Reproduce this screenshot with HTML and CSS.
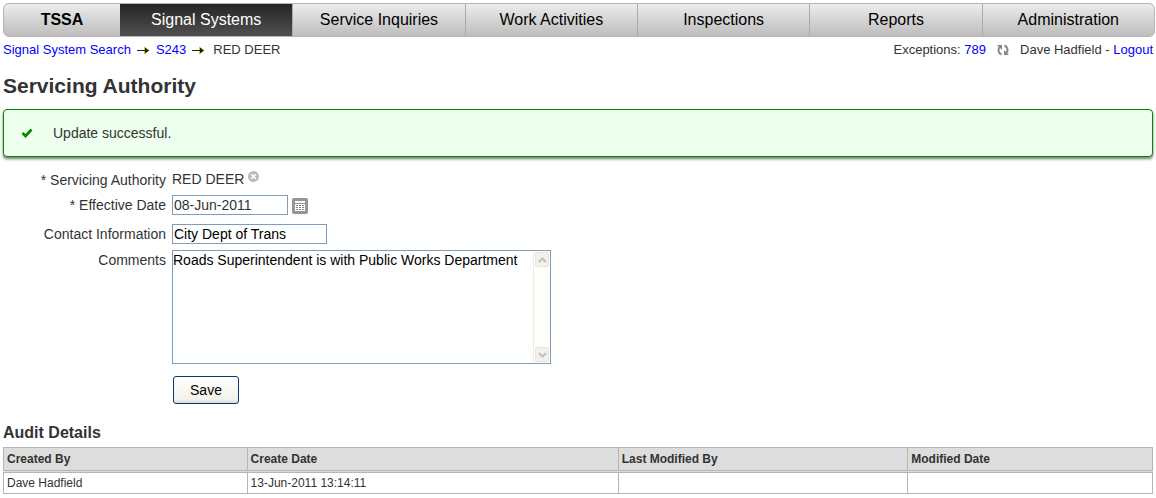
FILE: index.html
```html
<!DOCTYPE html>
<html lang="en">
<head>
<meta charset="utf-8">
<title>Servicing Authority</title>
<link rel="stylesheet" href="styles.css">
</head>
<body>
<nav class="tabs">
  <a class="tab brand" href="#">TSSA</a>
  <a class="tab active" href="#">Signal Systems</a>
  <a class="tab" href="#">Service Inquiries</a>
  <a class="tab" href="#">Work Activities</a>
  <a class="tab" href="#">Inspections</a>
  <a class="tab" href="#">Reports</a>
  <a class="tab" href="#">Administration</a>
</nav>
<div class="subbar">
  <div class="crumbs">
    <a href="#">Signal System Search</a>
    <svg class="arrow" width="13" height="9" viewBox="0 0 13 9"><path d="M7 .5l5.500 4L7 8.500z" fill="#cc3"/><path d="M0 4h9v1H0z" fill="#220"/><path d="M8 1.500l4 3-4 3z" fill="#220"/></svg>
    <a href="#">S243</a>
    <svg class="arrow" width="13" height="9" viewBox="0 0 13 9"><path d="M7 .5l5.500 4L7 8.500z" fill="#cc3"/><path d="M0 4h9v1H0z" fill="#220"/><path d="M8 1.500l4 3-4 3z" fill="#220"/></svg>
    <span class="here">RED DEER</span>
  </div>
  <div class="account">
    <span>Exceptions: <a href="#">789</a></span>
    <svg class="refresh" width="12" height="12" viewBox="0 0 12 12" fill="none" stroke="#888" stroke-width="2"><path d="M4.500 10.500C1 9 .5 5 3 2.500"/><path d="M0 1h5v5z" fill="#888" stroke="none"/><path d="M7.500 1.500C11 3 11.500 7 9 9.500"/><path d="M12 11H7V6z" fill="#888" stroke="none"/></svg>
    <span>Dave Hadfield - <a href="#">Logout</a></span>
  </div>
</div>
<main>
  <h1>Servicing Authority</h1>
  <div class="notice" role="status">
    <svg width="12" height="10" viewBox="0 0 12 10"><path d="M1.500 5L4.500 8 10.500 1.500" fill="none" stroke="#080" stroke-width="2.600"/></svg>
    <span>Update successful.</span>
  </div>
  <form class="form">
    <span class="label">* Servicing Authority</span>
    <div class="field value">RED DEER
      <button class="clear" type="button" aria-label="Clear"><svg width="11" height="11" viewBox="0 0 11 11"><circle cx="5.500" cy="5.500" r="5.500" fill="#bbb"/><path d="M3.300 3.300l4.400 4.400M7.700 3.300L3.300 7.700" stroke="#fff" stroke-width="1.600"/></svg></button>
    </div>
    <label class="label" for="date">* Effective Date</label>
    <div class="field">
      <input class="text date" id="date" type="text" value="08-Jun-2011">
      <button class="calendar" type="button" aria-label="Choose date"><svg width="16" height="16" viewBox="0 0 16 16"><rect width="16" height="16" rx="2" fill="#959595"/><path d="M3 3h10v2H3z" fill="#fff"/><path d="M3 6h10v7H3z" fill="#fff"/><path d="M4 7h2v1H4zM7 7h2v1H7zM10 7h2v1h-2zM4 9h2v1H4zM7 9h2v1H7zM10 9h2v1h-2zM4 11h2v1H4zM7 11h2v1H7zM10 11h2v1h-2z" fill="#858585"/></svg></button>
    </div>
    <label class="label" for="contact">Contact Information</label>
    <div class="field"><input class="text contact" id="contact" type="text" value="City Dept of Trans"></div>
    <label class="label" for="comments">Comments</label>
    <div class="field area">
      <textarea class="comments" id="comments">Roads Superintendent is with Public Works Department</textarea>
      <div class="scroll" aria-hidden="true">
        <span class="step"><svg width="9" height="6" viewBox="0 0 9 6"><path d="M1 5l3.500-3.500L8 5" fill="none" stroke="#c2c1b8" stroke-width="2"/></svg></span>
        <span class="step"><svg width="9" height="6" viewBox="0 0 9 6"><path d="M1 1l3.500 3.500L8 1" fill="none" stroke="#c2c1b8" stroke-width="2"/></svg></span>
      </div>
    </div>
    <button class="save" type="submit">Save</button>
  </form>
  <h2>Audit Details</h2>
  <table class="audit">
    <colgroup><col class="c1"><col class="c2"><col class="c3"><col class="c4"></colgroup>
    <thead><tr><th>Created By</th><th>Create Date</th><th>Last Modified By</th><th>Modified Date</th></tr></thead>
    <tbody><tr><td>Dave Hadfield</td><td>13-Jun-2011 13:14:11</td><td></td><td></td></tr></tbody>
  </table>
</main>
</body>
</html>
```
FILE: styles.css
```css
* { box-sizing: border-box; }
body {
  margin: 0;
  padding: 3px 3px 0;
  background: #fff;
  color: #333;
  font: 14px/18px "Liberation Sans", Arial, sans-serif;
}
a { color: #00f; text-decoration: none; }
svg { display: block; }
.tabs {
  display: flex;
  height: 34px;
  margin-right: -2px;
  border: 1px solid #b4b4b4;
  border-radius: 6px;
  overflow: hidden;
  background: linear-gradient(#ececec, #bdbdbd);
}
.tab {
  flex: 1 1 172px;
  border-left: 1px solid #aaa;
  color: #000;
  font-size: 16px;
  line-height: 32px;
  text-align: center;
}
.brand { flex: 0 0 116px; border-left: 0; font-weight: bold; }
.active { border-left: 0; background: linear-gradient(#252525, #505050); color: #fff; }
.subbar {
  display: flex;
  justify-content: space-between;
  margin-top: 4px;
  font-size: 13px;
}
.crumbs, .account { display: flex; align-items: center; }
.crumbs { gap: 6px; }
.here { margin-left: 2px; }
.account { gap: 11px; }
h1 { margin: 14px 0 10px; font-size: 21px; line-height: 26px; }
.notice {
  display: flex;
  align-items: center;
  gap: 20px;
  height: 48px;
  padding-left: 17px;
  border: 1px solid #080;
  border-radius: 4px;
  background: #edffed;
  box-shadow: 0 2px 3px #777;
}
.form {
  display: grid;
  grid-template-columns: 163px 1fr;
  column-gap: 6px;
  justify-items: start;
  margin-top: 13px;
}
.label { justify-self: end; padding-top: 1px; }
.field { display: flex; }
.value { height: 25px; gap: 4px; }
.clear, .calendar { padding: 0; border: 0; background: none; }
.clear { height: 11px; margin-top: 1px; }
.calendar { height: 16px; margin: 3px 0 0 4px; }
.text {
  height: 20px;
  padding: 0 1px;
  border: 1px solid #7f9db9;
  background: #fff;
  font: inherit;
}
.date { width: 116px; color: #333; }
.contact { width: 155px; }
.text.contact { color: #000; }
.field:has(.date) { height: 29px; }
.field:has(.contact) { height: 26px; }
.area { position: relative; width: 379px; max-width: 100%; height: 114px; }
.comments {
  width: 100%;
  height: 100%;
  padding: 0 18px 0 0;
  border: 1px solid #7f9db9;
  resize: none;
  overflow: hidden;
  color: #000;
  font: inherit;
}
.scroll {
  position: absolute;
  top: 1px;
  right: 1px;
  bottom: 1px;
  display: flex;
  flex-direction: column;
  justify-content: space-between;
  width: 17px;
  padding: 1px;
  border-left: 1px solid #eeede5;
  background: #fefefb;
}
.step {
  display: flex;
  align-items: center;
  justify-content: center;
  height: 15px;
  border: 1px solid #e6e5de;
  border-radius: 2px;
  background: #f2f1ec;
}
.save {
  grid-column: 2;
  width: 66px;
  height: 28px;
  margin: 12px 0 0 1px;
  border: 1px solid #003c74;
  border-radius: 3px;
  background: linear-gradient(#fff, #f3f2ec 85%, #dfdbcf);
  color: #000;
  font: inherit;
}
h2 { margin: 19px 0 5px; font-size: 16px; line-height: 19px; }
.audit {
  width: 100%;
  border-collapse: collapse;
  table-layout: fixed;
  font-size: 12px;
  line-height: 16px;
}
.audit th, .audit td { height: 22px; padding: 1px 3px; border: 1px solid #b5b5b5; text-align: left; }
.audit th { height: 24px; border-bottom: 3px double #b5b5b5; background: #ddd; }
.c1 { width: 21.2%; }
.c2 { width: 32.3%; }
.c3 { width: 25.2%; }
```
